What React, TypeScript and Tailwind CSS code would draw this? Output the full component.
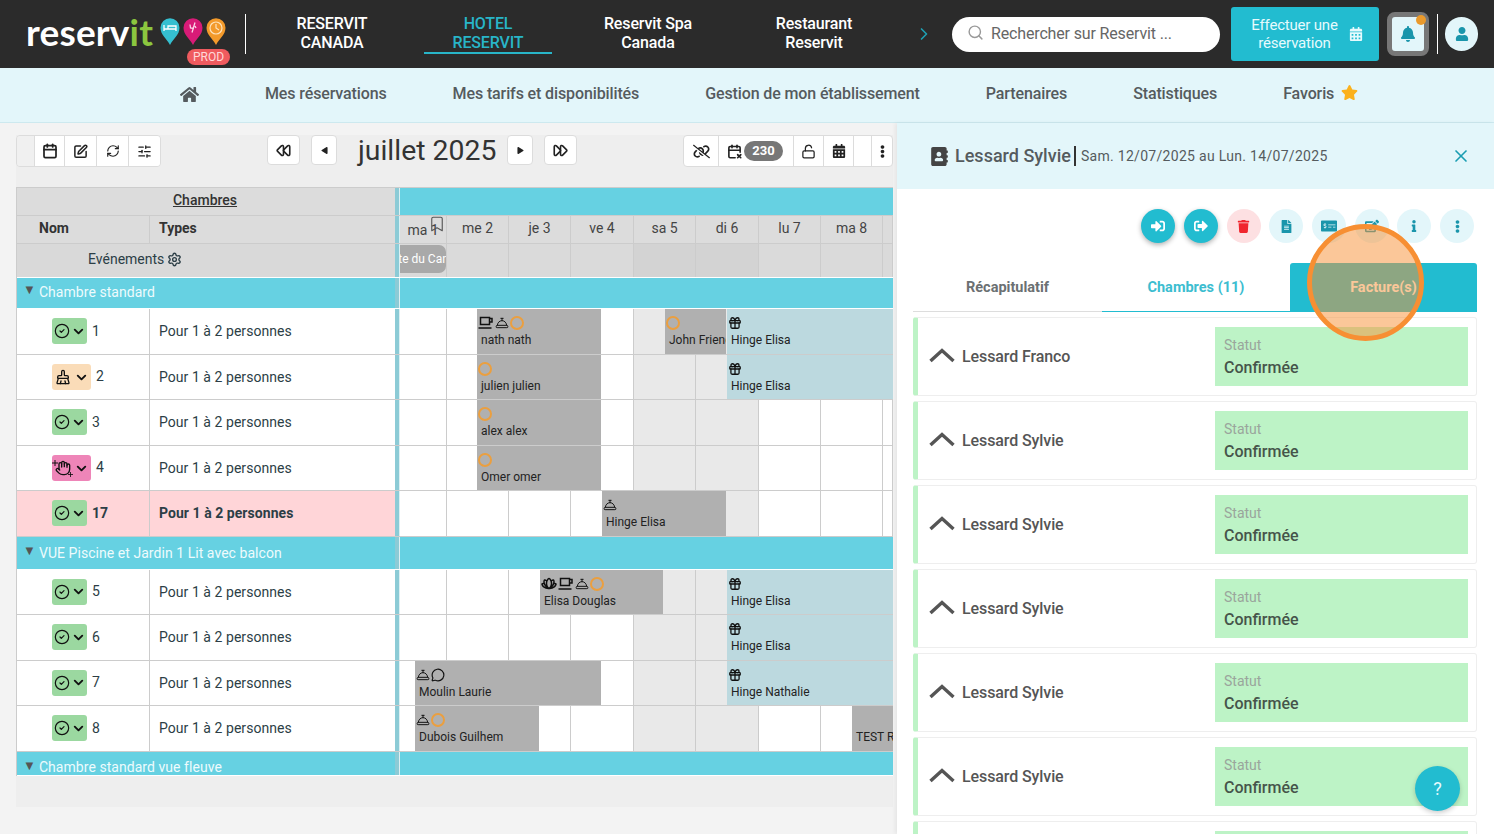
import React from "react";
import {
  Calendar, SquarePen, RefreshCw, SlidersHorizontal, Bookmark, Settings, CircleCheck, ChevronDown, ChevronRight,
  Search, X, Gift, ConciergeBell, MessageCircle, LockOpen, CalendarX2, BrushCleaning, Hand, Rewind, FastForward,
} from "lucide-react";
import { FaPlay, FaBell, FaUser, FaStar, FaSignInAlt, FaSignOutAlt, FaTrash, FaFileAlt, FaMoneyCheckAlt, FaEdit, FaInfo, FaEllipsisV, FaAddressBook, FaCalendarAlt, FaHome } from "react-icons/fa";
import { FaLinkSlash } from "react-icons/fa6";
import { PiFlowerLotusBold } from "react-icons/pi";

const font = { fontFamily: "Roboto, sans-serif" };

function Pin({ color, children }: { color: string; children?: React.ReactNode }) {
  return (
    <svg width="20" height="28" viewBox="0 0 20 28">
      <path d="M10 27C7 21 0.5 17 0.5 9.8A9.5 9.5 0 0 1 19.5 9.8C19.5 17 13 21 10 27Z" fill={color} />
      {children}
    </svg>
  );
}

function Logo() {
  return (
    <div className="relative flex items-center w-[219px] ml-[26px] h-full">
      <span className="text-[37px] font-bold leading-none text-white tracking-[0.2px] pb-[5px]" style={{ fontFamily: "Lato, sans-serif" }}>
        reserv<span className="text-[#8cc63f]">it</span>
      </span>
      <div className="flex gap-[3px] ml-[7px] pb-[4px]">
        <Pin color="#35bfd0"><path d="M4 7v6M4 11h12v2M16 11V8H8v3" stroke="#fff" strokeWidth="1.3" fill="none" /></Pin>
        <Pin color="#d81b77"><path d="M12 4.5l-3 10M7 6.5l.5 3.5 3.5.5M12 8l1 2" stroke="#fbd3e6" strokeWidth="1.3" fill="none" /></Pin>
        <Pin color="#f39a2b"><circle cx="10" cy="10" r="6" stroke="#fde3bd" strokeWidth="1.2" fill="none" /><path d="M10 6v4l3 2" stroke="#fde3bd" strokeWidth="1.2" fill="none" /></Pin>
      </div>
      <span className="absolute left-[161px] top-[49px] h-[16px] w-[43px] rounded-full bg-[#ef5b5f] text-[#ffd9d9] text-[12px] leading-[16px] text-center" style={font}>PROD</span>
    </div>
  );
}

function TopItem({ a, b, active, cls }: { a: string; b: string; active?: boolean; cls: string }) {
  return (
    <div className={`w-[128px] h-[40px] text-center text-[16px] leading-[19px] font-medium tracking-[-0.15px] ${cls} ${active ? "text-[#28b5c8] border-b-2 border-[#28b5c8]" : "text-white"}`}>
      <div>{a}</div>
      <div>{b}</div>
    </div>
  );
}

function Header() {
  return (
    <div className="h-[68px] bg-[#2b2b2b] flex items-center shrink-0">
      <Logo />
      <div className="w-px h-[40px] bg-white" />
      <TopItem a="RESERVIT" b="CANADA" cls="ml-[22px]" />
      <TopItem a="HOTEL" b="RESERVIT" active cls="ml-[28px]" />
      <TopItem a="Reservit Spa" b="Canada" cls="ml-[32px]" />
      <TopItem a="Restaurant" b="Reservit" cls="ml-[38px]" />
      <ChevronRight size={20} className="text-[#1f9fb2] ml-[36px]" />
      <div className="ml-[18px] w-[268px] h-[35px] bg-white rounded-[18px] flex items-center pl-[15px] text-[#666] text-[16px] tracking-[-0.15px]">
        <Search size={17} className="text-[#999] -mt-[4px]" />
        <span className="ml-[7px]">Rechercher sur Reservit ...</span>
      </div>
      <div className="ml-[11px] w-[148px] h-[54px] bg-[#22bcd0] rounded-[3px] flex items-center justify-center pl-[4px] text-[#e6fafd] text-[15px] leading-[18px] tracking-[-0.2px]">
        <div className="text-center"><div>Effectuer une</div><div>réservation</div></div>
        <FaCalendarAlt size={14} className="ml-[11px]" />
      </div>
      <div className="relative ml-[8px] w-[42px] h-[44px] rounded-[8px] border-[5px] border-[#777] bg-[#e3f6fa] flex items-center justify-center">
        <FaBell size={16} className="text-[#1a95ab]" />
        <span className="absolute -top-[2px] -right-[2px] w-[10px] h-[10px] rounded-full bg-[#ea9a2c]" />
      </div>
      <div className="ml-[8px] w-px h-[40px] bg-white" />
      <div className="ml-[7px] w-[33px] h-[34px] rounded-full bg-[#e3f6fa] flex items-center justify-center">
        <FaUser size={14} className="text-[#1a95ab]" />
      </div>
    </div>
  );
}

function SubNav() {
  const items = ["Mes réservations", "Mes tarifs et disponibilités", "Gestion de mon établissement", "Partenaires", "Statistiques"];
  return (
    <div className="h-[55px] bg-[#e3f6fa] border-b border-[#cde9ef] flex items-center pl-[180px] gap-[66px] text-[16px] font-medium tracking-[-0.12px] text-[#555b5e] shrink-0 pb-[2px]">
      <FaHome size={19} className="text-[#555b5e]" />
      {items.map((t) => <span key={t}>{t}</span>)}
      <span className="flex items-center gap-[7px]">Favoris <FaStar size={17} className="text-[#fbb11c] -mt-[4px]" /></span>
    </div>
  );
}

function TBtn({ children, cls }: { children?: React.ReactNode; cls: string }) {
  return <div className={`h-[30px] flex items-center justify-center text-[#222] ${cls}`}>{children}</div>;
}

function Toolbar() {
  return (
    <div className="h-[52px] bg-[#eeeeee] flex items-start shrink-0">
      <div className="flex w-[145px] border border-[#dcdcdc] rounded-[4px] overflow-hidden">
        <TBtn cls="w-[17px] bg-[#f0f0f0]" />
        <TBtn cls="w-[30px] bg-white border-l border-[#dcdcdc]"><Calendar size={16} strokeWidth={2.6} /></TBtn>
        <TBtn cls="w-[32px] bg-white border-l border-[#dcdcdc]"><SquarePen size={15} strokeWidth={2.4} /></TBtn>
        <TBtn cls="w-[32px] bg-white border-l border-[#dcdcdc]"><RefreshCw size={14} /></TBtn>
        <TBtn cls="w-[32px] bg-white border-l border-[#dcdcdc]"><SlidersHorizontal size={15} /></TBtn>
      </div>
      <div className="ml-[106px] w-[33px] h-[30px] flex items-center justify-center bg-white border border-[#dcdcdc] rounded-[4px]"><Rewind size={15} strokeWidth={2.6} className="text-[#222]" /></div>
      <div className="ml-[11px] w-[26px] h-[30px] flex items-center justify-center bg-white border border-[#dcdcdc] rounded-[4px]"><FaPlay size={7} className="text-[#222] rotate-180" /></div>
      <div className="ml-[21px] w-[138px] text-[28.4px] leading-[32px] text-[#333] whitespace-nowrap">juillet 2025</div>
      <div className="ml-[11px] w-[26px] h-[30px] flex items-center justify-center bg-white border border-[#dcdcdc] rounded-[4px]"><FaPlay size={7} className="text-[#222]" /></div>
      <div className="ml-[11px] w-[33px] h-[30px] flex items-center justify-center bg-white border border-[#dcdcdc] rounded-[4px]"><FastForward size={15} strokeWidth={2.6} className="text-[#222]" /></div>
      <div className="ml-[106px] flex w-[210px] bg-white border border-[#dcdcdc] rounded-[4px] overflow-hidden">
        <TBtn cls="w-[34px]"><FaLinkSlash size={17} /></TBtn>
        <TBtn cls="w-[75px] border-l border-[#dcdcdc] gap-[2px] pr-[2px]">
          <CalendarX2 size={15} strokeWidth={2.6} />
          <span className="w-[39px] h-[20px] rounded-full bg-[#777] text-white text-[13px] font-bold leading-[19px] text-center">230</span>
        </TBtn>
        <TBtn cls="w-[30px] border-l border-[#dcdcdc]"><LockOpen size={15} strokeWidth={2} /></TBtn>
        <TBtn cls="w-[30px] border-l border-[#dcdcdc]"><FaCalendarAlt size={14} /></TBtn>
        <TBtn cls="w-[18px] border-l border-[#dcdcdc]" />
        <TBtn cls="flex-1 border-l border-[#dcdcdc]"><FaEllipsisV size={13} /></TBtn>
      </div>
    </div>
  );
}

const COLS = [47, 62, 62, 63, 62, 63, 62, 62, 10];
const GRID = "grid grid-cols-[47px_62px_62px_63px_62px_63px_62px_62px_10px] w-[493px]";
const SEP = "w-[5px] bg-[#8ccbd6] border-r border-white/70";

function Coffee() {
  return (
    <svg width="16" height="14" viewBox="0 0 16 14" fill="none" stroke="#111" strokeWidth="1.5">
      <path d="M2.5 1.5h9v7h-9zM11.5 2.5h2.5v3.5h-2.5M0.5 12h13" />
    </svg>
  );
}

type Bk = { l: number; w: number; name: string; blue?: boolean; icons?: string[] };

function BkIcon({ k }: { k: string }) {
  if (k === "ring") return <span className="w-[14px] h-[14px] rounded-full border-2 border-[#eb9f3f]" />;
  if (k === "bell") return <ConciergeBell size={14} strokeWidth={1.7} className="text-[#111]" />;
  if (k === "gift") return <Gift size={14} strokeWidth={2.2} className="text-[#111]" />;
  if (k === "cup") return <Coffee />;
  if (k === "lotus") return <PiFlowerLotusBold size={16} className="text-[#111]" />;
  return <MessageCircle size={14} strokeWidth={2} className="text-[#111]" />;
}

function Booking({ b }: { b: Bk }) {
  return (
    <div
      className={`absolute top-0 bottom-0 overflow-hidden pt-[7px] pl-[1px] text-[12px] leading-[14px] text-[#222] ${b.blue ? "bg-[#bcd9df]" : "bg-[#b0b0b0]"}`}
      style={{ left: b.l - 400, width: b.w }}
    >
      <div className="flex items-center gap-[1px] h-[14px]">
        {(b.icons || []).map((k, i) => <BkIcon key={i} k={k} />)}
      </div>
      <div className="pl-[3px] pt-[2.5px] whitespace-nowrap">{b.name}</div>
    </div>
  );
}

function Status({ kind }: { kind: string }) {
  if (kind === "clean")
    return (
      <span className="flex items-center justify-center w-[39px] h-[26px] bg-[#fadcb8] rounded-[3px] text-[#111] gap-[3px]">
        <BrushCleaning size={16} /><ChevronDown size={15} strokeWidth={3} />
      </span>
    );
  if (kind === "hand")
    return (
      <span className="flex items-center justify-center w-[39px] h-[26px] bg-[#ee85b8] rounded-[3px] text-[#111] gap-[3px]">
        <span className="relative">
          <Hand size={16} />
          <svg width="6" height="6" viewBox="0 0 6 6" className="absolute -left-[3px] top-0" stroke="#111" strokeWidth="1"><path d="M3 0v6M0 3h6" /></svg>
          <svg width="5" height="5" viewBox="0 0 6 6" className="absolute -right-[2px] -bottom-[1px]" stroke="#111" strokeWidth="1"><path d="M3 0v6M0 3h6" /></svg>
        </span>
        <ChevronDown size={15} strokeWidth={3} />
      </span>
    );
  return (
    <span className="flex items-center justify-center w-[35px] h-[26px] bg-[#9bd8a0] rounded-[3px] text-[#111] gap-[1px] -mt-[1px]">
      <CircleCheck size={16} strokeWidth={1.8} /><ChevronDown size={15} strokeWidth={3} />
    </span>
  );
}

function Cells({ shade }: { shade?: boolean }) {
  return (
    <div className={`${GRID} h-full`}>
      {COLS.map((_, i) => (
        <div key={i} className={`border-r border-[#cccccc] ${shade && (i === 4 || i === 5) ? "bg-[#e9e9e9]" : ""}`} />
      ))}
    </div>
  );
}

function Row({ h, num, kind, bookings = [], hot }: { h: string; num: string; kind?: string; bookings?: Bk[]; hot?: boolean }) {
  return (
    <div className={`flex ${h} border-b border-[#cccccc]`}>
      <div className={`w-[378px] flex text-[14px] tracking-[0.05px] text-[#2c3e46] ${hot ? "bg-[#ffd5d8] font-bold" : "bg-white"}`}>
        <div className="w-[133px] border-r border-[#cccccc] flex items-center pl-[35px] gap-[5px]">
          <Status kind={kind || "ok"} />
          <span className="-mt-[1px]">{num}</span>
        </div>
        <div className="flex-1 pl-[9px] flex items-center">Pour 1 à 2 personnes</div>
      </div>
      <div className={SEP} />
      <div className="relative bg-white w-[493px]">
        <Cells shade />
        {bookings.map((b, i) => <Booking key={i} b={b} />)}
      </div>
    </div>
  );
}

function Group({ label, h, cls = "" }: { label: string; h: string; cls?: string }) {
  return (
    <div className={`flex ${h} bg-[#66d1e2] border-b border-white`}>
      <div className={`w-[378px] flex items-center pl-[6px] text-[14px] tracking-[0.05px] text-[#eefbfd] ${cls}`}>
        <span className="text-[#555] text-[13px] mr-[3px] -mt-[4px]">▼</span>{label}
      </div>
      <div className={SEP} />
      <div className="w-[493px]" />
    </div>
  );
}

const R1 = 477, RW = 124, H = 727, HW = 166;
const days = ["ma 1", "me 2", "je 3", "ve 4", "sa 5", "di 6", "lu 7", "ma 8", ""];

function Planning() {
  return (
    <div className="w-[877px] flex flex-col border-l border-[#cccccc]">
      <div className="flex h-[28px] border-t border-[#cccccc]">
        <div className="w-[378px] bg-[#dcdcdc] text-center font-medium text-[14px] leading-[25px] text-[#333] pr-[2px]"><span className="underline">Chambres</span></div>
        <div className={SEP} />
        <div className="w-[493px] bg-[#66d1e2]" />
      </div>
      <div className="flex h-[28px] border-t border-[#cccccc]">
        <div className="w-[378px] bg-[#dcdcdc] flex font-bold text-[14px] leading-[25px] text-[#333]">
          <div className="w-[133px] pl-[22px] border-r border-[#cccccc]">Nom</div>
          <div className="pl-[9px]">Types</div>
        </div>
        <div className={SEP} />
        <div className={`${GRID} bg-[#dcdcdc] text-[14px] leading-[25px] text-[#444] text-center`}>
          {days.map((d, i) => (
            <div key={i} className="relative border-r border-[#cccccc]">
              {i === 0 ? <span className="block pt-[2px]">{d}</span> : d}
              {i === 0 && <Bookmark size={18} strokeWidth={1.5} className="absolute -top-[1px] right-0 text-[#555]" />}
            </div>
          ))}
        </div>
      </div>
      <div className="flex h-[34px] border-t border-[#cccccc]">
        <div className="w-[378px] bg-[#d9d9d9] flex items-center text-[14px] text-[#2c3e46] pl-[71px] pb-[2px] gap-[3px]">
          Evénements <Settings size={15} strokeWidth={2.2} />
        </div>
        <div className={SEP} />
        <div className={`${GRID} bg-[#dadada] relative`}>
          {COLS.map((_, i) => (
            <div key={i} className={`border-r border-[#cccccc] ${i === 4 || i === 5 ? "bg-[#d3d3d3]" : ""}`} />
          ))}
          <div className="absolute left-0 top-[1px] w-[46px] h-[28px] pl-[8px] bg-[#a9a9a9] rounded-r-[7px] flex items-center justify-center overflow-hidden text-white text-[12px] whitespace-nowrap">
            Fête du Canada
          </div>
        </div>
      </div>
      <div className="h-[1px] bg-white" />
      <Group label="Chambre standard" h="h-[31px]" cls="pb-[2px]" />
      <Row h="h-[46px]" num="1" bookings={[
        { l: R1, w: RW, name: "nath nath", icons: ["cup", "bell", "ring"] },
        { l: 665, w: 61, name: "John Friend", icons: ["ring"] },
        { l: H, w: HW, name: "Hinge Elisa", blue: true, icons: ["gift"] },
      ]} />
      <Row h="h-[45px]" num="2" kind="clean" bookings={[
        { l: R1, w: RW, name: "julien julien", icons: ["ring"] },
        { l: H, w: HW, name: "Hinge Elisa", blue: true, icons: ["gift"] },
      ]} />
      <Row h="h-[46px]" num="3" bookings={[{ l: R1, w: RW, name: "alex alex", icons: ["ring"] }]} />
      <Row h="h-[45px]" num="4" kind="hand" bookings={[{ l: R1, w: RW, name: "Omer omer", icons: ["ring"] }]} />
      <Row h="h-[46px]" num="17" hot bookings={[{ l: 602, w: RW, name: "Hinge Elisa", icons: ["bell"] }]} />
      <Group label="VUE Piscine et Jardin 1 Lit avec balcon" h="h-[33px]" />
      <Row h="h-[45px]" num="5" bookings={[
        { l: 540, w: 123, name: "Elisa Douglas", icons: ["lotus", "cup", "bell", "ring"] },
        { l: H, w: HW, name: "Hinge Elisa", blue: true, icons: ["gift"] },
      ]} />
      <Row h="h-[46px]" num="6" bookings={[{ l: H, w: HW, name: "Hinge Elisa", blue: true, icons: ["gift"] }]} />
      <Row h="h-[45px]" num="7" bookings={[
        { l: 415, w: 186, name: "Moulin Laurie", icons: ["bell", "msg"] },
        { l: H, w: HW, name: "Hinge Nathalie", blue: true, icons: ["gift"] },
      ]} />
      <Row h="h-[46px]" num="8" bookings={[
        { l: 415, w: 124, name: "Dubois Guilhem", icons: ["bell", "ring"] },
        { l: 852, w: 41, name: "TEST RESA" },
      ]} />
      <Group label="Chambre standard vue fleuve" h="h-[24px]" cls="pt-[8px]" />
      <div className="h-[31px] bg-[#eeeeee] -ml-[1px]" />
    </div>
  );
}

function RoundBtn({ children, cls }: { children: React.ReactNode; cls: string }) {
  return <div className={`w-[34px] h-[34px] rounded-full flex items-center justify-center ${cls}`}>{children}</div>;
}

function Card({ name }: { name: string }) {
  return (
    <div className="h-[79px] shrink-0 flex items-center border border-[#eeeeee] border-l-[5px] border-l-[#bdf3c6] rounded-[3px] bg-white">
      <svg width="26" height="15" viewBox="0 0 26 15" fill="none" stroke="#555" strokeWidth="3.4" className="ml-[11px] -mt-[3px] shrink-0">
        <path d="M1.5 13L13 2.5L24.5 13" />
      </svg>
      <span className="ml-[7px] w-[253px] text-[16px] font-medium tracking-[-0.1px] text-[#555]">{name}</span>
      <div className="w-[253px] h-[59px] bg-[#bdf3c6] pl-[9px] pt-[9px]">
        <div className="text-[14px] leading-[18px] text-[#9aa59c]">Statut</div>
        <div className="text-[16px] leading-[20px] mt-[4px] font-medium text-[#46544a]">Confirmée</div>
      </div>
    </div>
  );
}

function Panel() {
  const cyan = "bg-[#22bcd0] text-white shadow-[0_2px_5px_rgba(0,0,0,0.3)]";
  const pale = "bg-[#e3f6fa] text-[#1a95ab]";
  return (
    <div className="w-[597px] ml-[2px] bg-white flex flex-col overflow-hidden shadow-[-2px_0_4px_rgba(0,0,0,0.06)]">
      <div className="h-[66px] bg-[#e3f6fa] flex items-center shrink-0 pl-[33px] text-[#555b5e]">
        <FaAddressBook size={19} className="text-[#444]" />
        <span className="ml-[6px] text-[18px] font-medium -mt-[2px]">Lessard Sylvie</span>
        <span className="ml-[3px] w-[2px] h-[20px] bg-[#333]" />
        <span className="ml-[5px] text-[14px] tracking-[0.3px]">Sam. 12/07/2025 au Lun. 14/07/2025</span>
        <X size={20} className="ml-auto mr-[23px] text-[#1a9db2]" />
      </div>
      <div className="flex justify-end gap-[8.7px] pr-[20px] pt-[20px] shrink-0">
        <RoundBtn cls={`${cyan}`}><FaSignInAlt size={14} /></RoundBtn>
        <RoundBtn cls={`${cyan}`}><FaSignOutAlt size={14} /></RoundBtn>
        <RoundBtn cls="bg-[#fde0e2] text-[#f0262e]"><FaTrash size={13} /></RoundBtn>
        <RoundBtn cls={pale}><FaFileAlt size={13} /></RoundBtn>
        <RoundBtn cls={pale}><FaMoneyCheckAlt size={16} /></RoundBtn>
        <RoundBtn cls={pale}><FaEdit size={14} /></RoundBtn>
        <RoundBtn cls={pale}><FaInfo size={12} /></RoundBtn>
        <RoundBtn cls={pale}><FaEllipsisV size={13} /></RoundBtn>
      </div>
      <div className="ml-[16px] mt-[20px] w-[564px] flex h-[49px] text-[14.5px] font-bold shrink-0">
        <div className="w-[189px] flex items-center justify-center border-b border-[#dddddd] text-[#6b7072] pt-[1px]">Récapitulatif</div>
        <div className="w-[188px] flex items-center justify-center border-b border-[#22bcd0] text-[#3cbdd0] pt-[1px]">Chambres (11)</div>
        <div className="flex-1 flex items-center justify-center bg-[#22bcd0] text-white rounded-t-[3px]">Facture(s)</div>
      </div>
      <div className="ml-[16px] mt-[5px] w-[564px] flex flex-col gap-[5px]">
        <Card name="Lessard Franco" />
        {[0, 1, 2, 3, 4, 5].map((i) => <Card key={i} name="Lessard Sylvie" />)}
      </div>
    </div>
  );
}

export default function App() {
  return (
    <div className="relative w-[1494px] h-[834px] overflow-hidden flex flex-col bg-[#f3f3f3]" style={font}>
      <Header />
      <SubNav />
      <div className="flex flex-1 min-h-0">
        <div className="w-[895px] pl-[16px] pr-[2px] pt-[12px] shrink-0 overflow-hidden">
          <Toolbar />
          <Planning />
        </div>
        <Panel />
      </div>
      <div className="absolute left-[1307px] top-[224px] w-[117px] h-[117px] rounded-full border-[5px] border-[#f78f33] bg-[#f78f33]/50" />
      <div className="absolute left-[1415px] top-[766px] w-[45px] h-[45px] rounded-full bg-[#22bcd0] text-[#e6fafd] text-[18px] flex items-center justify-center shadow-[0_2px_5px_rgba(0,0,0,0.2)]">?</div>
    </div>
  );
}
